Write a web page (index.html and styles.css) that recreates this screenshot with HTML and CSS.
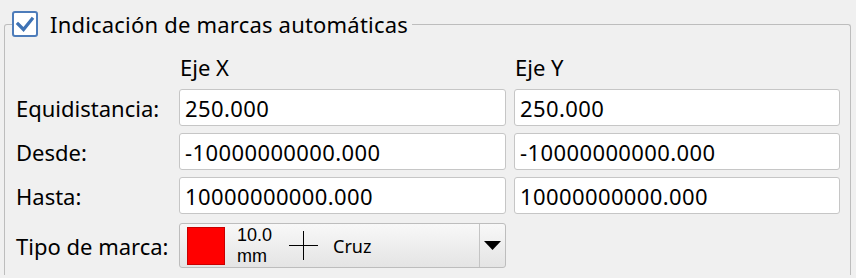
FILE: index.html
```html
<!DOCTYPE html>
<html lang="es">
<head>
<meta charset="utf-8">
<title>Marcas</title>
<link rel="stylesheet" href="styles.css">
</head>
<body>
<fieldset class="group">
  <legend class="legend">
    <span class="check">
      <svg width="26" height="26" viewBox="0 0 26 26"><path d="M6 13 L11.5 18.5 L20 8" fill="none" stroke="#3e72b4" stroke-width="3.2" stroke-linecap="square" stroke-linejoin="miter"/></svg>
    </span>
    <span class="legend-text">Indicación de marcas automáticas</span>
  </legend>
  <div class="grid">
    <div></div>
    <div class="head">Eje X</div>
    <div class="head">Eje Y</div>

    <div class="label">Equidistancia:</div>
    <div class="input">250.000</div>
    <div class="input">250.000</div>

    <div class="label">Desde:</div>
    <div class="input">-10000000000.000</div>
    <div class="input">-10000000000.000</div>

    <div class="label">Hasta:</div>
    <div class="input">10000000000.000</div>
    <div class="input">10000000000.000</div>

    <div class="label label-combo">Tipo de marca:</div>
    <div class="combo">
      <div class="combo-main">
        <span class="swatch"></span>
        <span class="size"><span class="size-line">10.0</span><span class="size-line">mm</span></span>
        <svg class="cross" width="29" height="29" viewBox="0 0 29 29"><path d="M0 14.5 H29 M14.5 0 V29" stroke="#000" stroke-width="1"/></svg>
        <span class="name">Cruz</span>
      </div>
      <div class="combo-btn">
        <svg width="17" height="9" viewBox="0 0 17 9"><path d="M0 0 H17 L8.5 9 Z" fill="#000"/></svg>
      </div>
    </div>
    <div></div>
  </div>
</fieldset>
</body>
</html>
```
FILE: styles.css
```css
html, body {
  margin: 0;
  padding: 0;
  background: #f0f0f0;
}
body {
  font-family: "Noto Sans", "Open Sans", sans-serif;
  font-size: 22px;
  color: #000;
}
.group {
  margin: 11px 5px 0 4px;
  padding: 0 10px 7px 7px;
  border: 1px solid #bdbdbd;
  border-bottom: none;
  border-radius: 3px 3px 0 0;
  min-width: 0;
}
.legend {
  display: flex;
  align-items: center;
  gap: 12px;
  padding: 0 4px 0 0;
  height: 26px;
}
.check {
  box-sizing: border-box;
  width: 26px;
  height: 26px;
  border: 2px solid #4d7cba;
  border-radius: 3px;
  background: #fff;
  display: flex;
  align-items: center;
  justify-content: center;
}
.check svg {
  flex: none;
}
.legend-text {
  font-size: 22px;
  line-height: 26px;
  letter-spacing: 0.2px;
  white-space: nowrap;
}
.grid {
  display: grid;
  grid-template-columns: 155px 327px 326px;
  grid-template-rows: 30px 37px 37px 37px 47px;
  column-gap: 8px;
  row-gap: 7px;
  margin: 15px 0 0 4px;
}
.head {
  line-height: 30px;
  padding-left: 1px;
}
.label {
  display: flex;
  align-items: center;
  white-space: nowrap;
}
.label-combo {
  margin-top: 2px;
}
.input {
  box-sizing: border-box;
  background: #fff;
  border: 1px solid #c6c6c6;
  border-radius: 3px;
  padding: 0 5px;
  display: flex;
  align-items: center;
  white-space: nowrap;
  letter-spacing: 0.4px;
}
.combo {
  box-sizing: border-box;
  margin-top: 2px;
  border: 1px solid #bdbdbd;
  border-radius: 3px;
  background: linear-gradient(#f8f8f8, #e4e4e4);
  display: flex;
}
.combo-main {
  flex: 1;
  display: flex;
  align-items: center;
  padding-left: 7px;
}
.swatch {
  box-sizing: border-box;
  width: 38px;
  height: 38px;
  background: #ff0000;
  border: 1px solid #c80000;
  flex: none;
}
.size {
  display: flex;
  flex-direction: column;
  font-family: "Liberation Sans", Arial, sans-serif;
  font-size: 18px;
  margin-left: 12px;
  margin-top: 1px;
}
.size-line {
  display: block;
  line-height: 21px;
}
.cross {
  margin-left: 17px;
  flex: none;
}
.name {
  font-size: 18px;
  margin-left: 15px;
}
.combo-btn {
  width: 25px;
  border-left: 1px solid #c4c4c4;
  display: flex;
  align-items: center;
  justify-content: center;
}
```
